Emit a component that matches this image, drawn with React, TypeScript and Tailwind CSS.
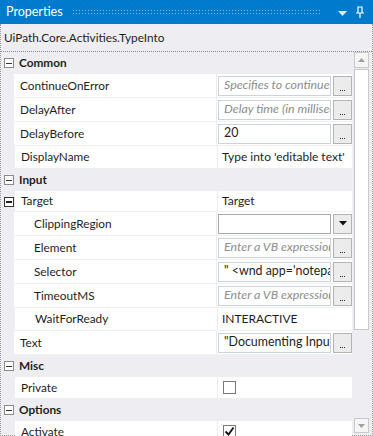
import React from "react";

type Row =
  | { kind: "cat"; label: string }
  | {
      kind: "prop";
      name: string;
      h: string;
      indent?: boolean;
      expander?: boolean;
      value?: string;
      editor?: "text" | "combo" | "check";
      placeholder?: boolean;
      checked?: boolean;
    };

const rows: Row[] = [
  { kind: "cat", label: "Common" },
  { kind: "prop", name: "ContinueOnError", h: "h-[24px]", editor: "text", value: "Specifies to continue", placeholder: true },
  { kind: "prop", name: "DelayAfter", h: "h-[24px]", editor: "text", value: "Delay time (in milliseconds)", placeholder: true },
  { kind: "prop", name: "DelayBefore", h: "h-[24px]", editor: "text", value: "20" },
  { kind: "prop", name: "DisplayName", h: "h-[23px]", value: "Type into 'editable text'" },
  { kind: "cat", label: "Input" },
  { kind: "prop", name: "Target", h: "h-[21px]", expander: true, value: "Target" },
  { kind: "prop", name: "ClippingRegion", h: "h-[24px]", indent: true, editor: "combo" },
  { kind: "prop", name: "Element", h: "h-[24px]", indent: true, editor: "text", value: "Enter a VB expression", placeholder: true },
  { kind: "prop", name: "Selector", h: "h-[24px]", indent: true, editor: "text", value: "\" <wnd app='notepad.exe' />" },
  { kind: "prop", name: "TimeoutMS", h: "h-[24px]", indent: true, editor: "text", value: "Enter a VB expression", placeholder: true },
  { kind: "prop", name: "WaitForReady", h: "h-[23px]", indent: true, value: "INTERACTIVE" },
  { kind: "prop", name: "Text", h: "h-[24px]", editor: "text", value: "\"Documenting Input\"" },
  { kind: "cat", label: "Misc" },
  { kind: "prop", name: "Private", h: "h-[22px]", editor: "check" },
  { kind: "cat", label: "Options" },
  { kind: "prop", name: "Activate", h: "h-[22px]", editor: "check", checked: true },
];

const MinusBox = ({ dark }: { dark?: boolean }) => (
  <span
    className={
      dark
        ? "flex h-[10px] w-[10px] items-center justify-center border border-[#333] bg-white"
        : "flex h-[10px] w-[10px] items-center justify-center border border-[#8a8a8a] bg-white"
    }
  >
    <span className={dark ? "h-[2px] w-[6px] bg-[#222]" : "h-px w-[6px] bg-[#333]"} />
  </span>
);

const Ellipsis = () => (
  <div className="ml-[2px] flex h-[20px] w-[19px] shrink-0 items-end justify-center border border-[#b4b4b4] bg-[#ececec] pb-[4px]">
    <span className="flex gap-[1px]">
      <span className="h-px w-px bg-[#333]" />
      <span className="h-px w-px bg-[#333]" />
      <span className="h-px w-px bg-[#333]" />
    </span>
  </div>
);

const Value = ({ r }: { r: Extract<Row, { kind: "prop" }> }) => {
  if (r.editor === "text") {
    return (
      <div className="flex h-full items-center pl-px">
        <div className="flex h-[20px] w-[113px] items-center overflow-hidden whitespace-nowrap border border-[#cdd3de] bg-white pl-[5px] text-[12.4px]">
          <span className={r.placeholder ? "italic text-[#8d8d8d]" : "text-[#1e1e1e]"}>{r.value}</span>
        </div>
        <Ellipsis />
      </div>
    );
  }
  if (r.editor === "combo") {
    return (
      <div className="flex h-full items-center pl-px">
        <div className="h-[20px] w-[113px] border border-[#a9a9a9] bg-white" />
        <div className="ml-[2px] flex h-[20px] w-[19px] items-center justify-center border border-[#b4b4b4] bg-[#ececec]">
          <svg width="8" height="5" viewBox="0 0 8 5">
            <path d="M0 0h8L4 4.5z" fill="#111" />
          </svg>
        </div>
      </div>
    );
  }
  if (r.editor === "check") {
    return (
      <div className="flex h-full items-center pl-[5px]">
        <div className="flex h-[13px] w-[13px] items-center justify-center border border-[#7a7a7a] bg-white">
          {r.checked && (
            <svg width="11" height="11" viewBox="0 0 11 11">
              <path d="M1.5 5.5l3 3 5-7" fill="none" stroke="#111" strokeWidth="1.8" />
            </svg>
          )}
        </div>
      </div>
    );
  }
  return <div className="flex h-full items-center whitespace-nowrap pl-[4px] text-[12px] text-[#1e1e1e]">{r.value}</div>;
};

export default function App() {
  return (
    <div
      className="h-[436px] w-[373px] overflow-hidden bg-[#eeeef2] text-[11.8px] text-[#1e1e1e]"
      style={{ fontFamily: "Lato, 'Noto Sans', sans-serif" }}
    >
      {/* title bar */}
      <div className="flex h-[24px] items-center bg-[#007acc] pl-[6px] pr-[8px] text-white">
        <span className="text-[12.5px]">Properties</span>
        <div className="ml-[9px] mr-[18px] h-[6px] flex-1 bg-[radial-gradient(circle,rgba(255,255,255,0.45)_0.8px,transparent_1px)] bg-[length:3px_3px]" />
        <svg width="9" height="6" viewBox="0 0 9 6" className="mr-[8px] mt-[3px]">
          <path d="M0 0h9L4.5 5z" fill="#dfeefa" />
        </svg>
        <svg width="10" height="13" viewBox="0 0 10 13">
          <path d="M2.5 1h5M3 1v6h4V1M7 1v6M1 7h8M5 7v5" fill="none" stroke="#fff" strokeWidth="1.2" />
        </svg>
      </div>

      <div className="h-[412px] border-x border-b border-dotted border-[#9a9a9a]">
        <div className="flex h-[28px] items-center border-b border-dotted border-[#8a8a8a] pl-[3px] text-[11.8px]">
          UiPath.Core.Activities.TypeInto
        </div>

        <div className="flex">
          <div className="w-[351px]">
            {rows.map((r, i) =>
              r.kind === "cat" ? (
                <div key={i} className="flex h-[22px] items-center">
                  <div className="flex w-[14px] justify-center pl-px">
                    <MinusBox />
                  </div>
                  <span className="pl-[4px] font-bold">{r.label}</span>
                </div>
              ) : (
                <div key={i} className={`flex ${r.h}`}>
                  <div className="flex w-[14px] items-center justify-center pl-px">
                    {r.expander && <MinusBox dark />}
                  </div>
                  <div className="flex flex-1 border-b border-[#f0f0f0] bg-white">
                    <div
                      className={`flex w-[203px] items-center border-r border-[#ececec] ${
                        r.indent ? "pl-[20px]" : "pl-[6px]"
                      }`}
                    >
                      {r.name}
                    </div>
                    <div className="flex-1 overflow-hidden">
                      <Value r={r} />
                    </div>
                  </div>
                </div>
              )
            )}
          </div>

          {/* scrollbar */}
          <div className="ml-[2px] flex h-[381px] w-[15px] flex-col">
            <div className="flex h-[16px] items-center justify-center border border-[#c8c8c8] bg-[#f5f5f5]">
              <svg width="7" height="4" viewBox="0 0 7 4">
                <path d="M0 4h7L3.5 0z" fill="#a0a0a0" />
              </svg>
            </div>
            <div className="mt-px h-[261px] border border-[#c8c8c8] bg-white" />
            <div className="flex-1" />
            <div className="flex h-[15px] items-center justify-center border border-[#c8c8c8] bg-[#f5f5f5]">
              <svg width="7" height="4" viewBox="0 0 7 4">
                <path d="M0 0h7L3.5 4z" fill="#a0a0a0" />
              </svg>
            </div>
          </div>
        </div>
      </div>
    </div>
  );
}
